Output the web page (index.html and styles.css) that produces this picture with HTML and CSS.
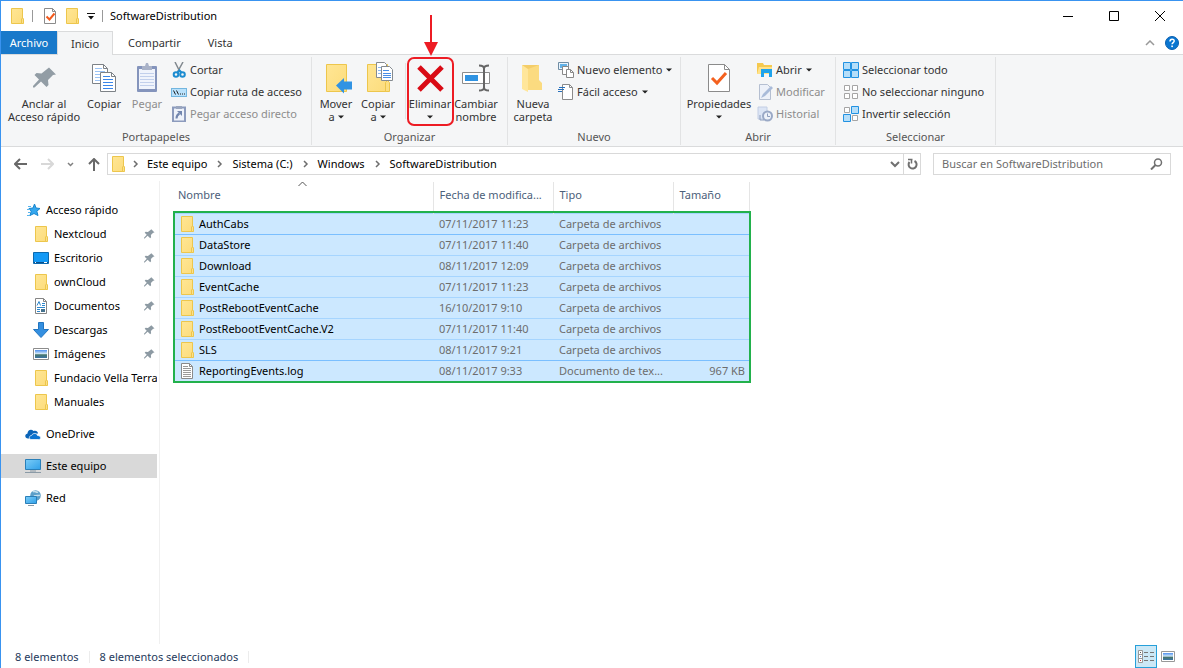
FILE: index.html
```html
<!DOCTYPE html>
<html lang="es">
<head>
<meta charset="utf-8">
<title>SoftwareDistribution</title>
<link rel="stylesheet" href="styles.css">
</head>
<body>
<svg class="sprite" aria-hidden="true">
  <defs>
    <linearGradient id="gold" x1="0" y1="0" x2="1" y2="1"><stop offset="0" stop-color="#ffe694"/><stop offset="1" stop-color="#fcdc7c"/></linearGradient>
    <linearGradient id="screen" x1="0" y1="0" x2="1" y2="1"><stop offset="0" stop-color="#7ccdf8"/><stop offset="1" stop-color="#2f9fe8"/></linearGradient>
    <linearGradient id="sky" x1="0" y1="0" x2="0" y2="1"><stop offset="0" stop-color="#4d8ff0"/><stop offset=".45" stop-color="#cfe6f6"/><stop offset=".6" stop-color="#47766c"/><stop offset="1" stop-color="#3b74a6"/></linearGradient>
  </defs>
  <symbol id="folder" viewBox="0 0 16 16"><path d="M2.500.5h11v10h.5v5h-11.500z" fill="url(#gold)" stroke="#edc64c"/><path d="M12.500 15.500v-4.500l1-1 1 1v4.500z" fill="#fbe08a" stroke="#edc64c"/></symbol>
  <symbol id="pin" viewBox="5 5 24 24"><path d="M21 5.500l7 7-3 .5-5 5 .5 5-2 2-5.500-5.500-6.500 6-1.500 0 0-1.500 6-6.500-4.500-4.500 2-2 5 .5 5-4z" fill="#8d9aa3"/></symbol>
  <symbol id="check-doc" viewBox="0 0 14 17"><path d="M1.500.5h8l3 3v12h-11z" fill="#fff" stroke="#8b8b8b"/><path d="M9.500.5v3h3" fill="none" stroke="#8b8b8b"/><path d="M3.500 8.500l3 3 5-6" fill="none" stroke="#f25a1d" stroke-width="2"/></symbol>
  <symbol id="down" viewBox="0 0 6 4"><path d="M0 .5h6l-3 3z" fill="currentColor"/></symbol>
</svg>

<div class="window">
  <header class="titlebar">
    <svg class="i16"><use href="#folder"/></svg>
    <span class="bar"></span>
    <button class="plain" aria-label="Propiedades"><svg width="14" height="17"><use href="#check-doc"/></svg></button>
    <button class="plain" aria-label="Nueva carpeta"><svg class="i16"><use href="#folder"/></svg></button>
    <button class="plain" aria-label="Personalizar"><svg width="8" height="7" viewBox="0 0 8 7"><path d="M0 .5h8" stroke="#111"/><path d="M1 3h6L4 6.500z" fill="#111"/></svg></button>
    <span class="bar"></span>
    <h1>SoftwareDistribution</h1>
    <div class="winbtns">
      <button class="plain" aria-label="Minimizar"><svg width="10" height="10"><path d="M0 5.500h10" stroke="#000"/></svg></button>
      <button class="plain" aria-label="Maximizar"><svg width="10" height="10"><path d="M.5.5h9v9h-9z" fill="none" stroke="#000"/></svg></button>
      <button class="plain" aria-label="Cerrar"><svg width="10" height="10"><path d="M0 0l10 10M10 0L0 10" stroke="#000"/></svg></button>
    </div>
  </header>

  <nav class="tabs">
    <button class="tab file">Archivo</button>
    <button class="tab active">Inicio</button>
    <button class="tab">Compartir</button>
    <button class="tab">Vista</button>
    <div class="tabs-right">
      <button class="plain" aria-label="Minimizar cinta"><svg width="10" height="6"><path d="M1 5l4-4 4 4" fill="none" stroke="#999" stroke-width="1.500"/></svg></button>
      <button class="plain" aria-label="Ayuda"><svg width="14" height="14"><circle cx="7" cy="7" r="6.500" fill="#0a76d1" stroke="#0b5fae"/><path d="M5 5.500c0-3 4.200-3 4.200-.4 0 1.500-2.100 1.500-2.100 3.200" fill="none" stroke="#fff" stroke-width="1.500"/><rect x="6.300" y="9.500" width="1.600" height="1.600" fill="#fff"/></svg></button>
    </div>
  </nav>

  <section class="ribbon">
    <div class="group g-clip">
      <div class="tools">
        <button class="big w80"><svg width="32" height="32" viewBox="0 0 32 32"><path d="M21 5.500l7 7-3 .5-5 5 .5 5-2 2-5.500-5.500-6.500 6-1.500 0 0-1.500 6-6.500-4.500-4.500 2-2 5 .5 5-4z" fill="#929da5"/></svg><span>Anclar al<br>Acceso rápido</span></button>
        <button class="big w40"><svg width="32" height="32" viewBox="0 0 32 32"><g stroke="#7d8287" fill="#fff"><path d="M4.500 2.500h11l4 4v15h-15z"/><path d="M15.500 2.500v4h4" fill="none"/></g><path d="M7 6.500h7M7 9.500h10M7 12.500h10M7 15.500h10M7 18.500h10" stroke="#9bc3f5"/><g stroke="#7d8287" fill="#fff"><path d="M12.500 10.500h11l4 4v15h-15z"/><path d="M23.500 10.500v4h4" fill="none"/></g><path d="M15 14.500h7M15 17.500h10M15 20.500h10M15 23.500h10M15 26.500h10" stroke="#3a86ea"/></svg><span>Copiar</span></button>
        <button class="big w46" disabled><svg width="32" height="32" viewBox="0 0 32 32"><rect x="6" y="4" width="20" height="26" rx="1" fill="#8494bc"/><path d="M8 7h16v20H8z" fill="#f0f4fc"/><path d="M9 11.500h14M9 14.500h14M9 17.500h14M9 20.500h14M9 23.500h14" stroke="#c2d0ec"/><path d="M11 8V4h3l1-3h2l1 3h3v4z" fill="#a9b2c8"/></svg><span>Pegar</span></button>
        <div class="stack">
          <button class="small"><svg class="i16" viewBox="0 0 16 16"><path d="M4 0l5 10M12 0L6.500 10" stroke="#82898f" stroke-width="1.500"/><g fill="none" stroke="#1d8cd0" stroke-width="2"><circle cx="5" cy="12.500" r="2.300"/><circle cx="11.500" cy="12.500" r="2.300"/><path d="M6.500 10.500l2-2 2 2"/></g></svg>Cortar</button>
          <button class="small"><svg class="i16" viewBox="0 0 16 16"><rect x=".5" y="4.500" width="15" height="8" fill="#b9e1fb" stroke="#73b6df"/><path d="M2.500 6.500l2 4M5.500 6.500l2 4M9 10h1M11 10h1M13 10h1" stroke="#222"/></svg>Copiar ruta de acceso</button>
          <button class="small" disabled><svg class="i16" viewBox="0 0 16 16"><rect x="2" y="1.500" width="12" height="14" fill="#eef2fa" stroke="#8c9bbd" stroke-width="2"/><path d="M5 0h6v3H5z" fill="#9aa6bf"/><path d="M5.500 12.500c0-3 1-4 3-5" fill="none" stroke="#7286ae" stroke-width="2"/><path d="M6 5h5v5z" fill="#7286ae"/></svg>Pegar acceso directo</button>
        </div>
      </div>
      <h2>Portapapeles</h2>
    </div>

    <div class="group g-org">
      <div class="tools">
        <button class="big w42"><svg width="32" height="32" viewBox="0 0 32 32"><path d="M6.500 2.500h20v27h-20z" fill="url(#gold)" stroke="#edc64c"/><path d="M32 19.500v8h-8v4l-8-8 8-7.500v3.500z" fill="#3193e3"/></svg><span>Mover<br>a <svg class="dd"><use href="#down"/></svg></span></button>
        <button class="big w42"><svg width="32" height="32" viewBox="0 0 32 32"><path d="M5.500 2.500h20v27h-20z" fill="url(#gold)" stroke="#edc64c"/><path d="M23.500 29.500v-9l2-2 2 2v9z" fill="#fbdf83" stroke="#edc64c"/><g fill="#fff" stroke="#858b90"><path d="M14.500.5h8l2 2v13h-10z"/><path d="M19.500 4.500h8l3 3v11h-11z"/></g><path d="M16 5.500h3M16 8.500h3M16 11.500h3" stroke="#8bb9ef"/><path d="M21 8.500h6M21 11.500h8M21 13.500h8M21 15.500h8" stroke="#4a8fe6"/></svg><span>Copiar<br>a <svg class="dd"><use href="#down"/></svg></span></button>
        <span class="divider"></span>
        <button class="big w46 target"><svg width="32" height="32" viewBox="0 0 32 32"><path d="M5 5l23 23M28 5L5 28" stroke="#d90b15" stroke-width="5"/></svg><span>Eliminar<br><svg class="dd"><use href="#down"/></svg></span>
          <svg class="arrow" width="14" height="42"><path d="M7 0v30" stroke="#ed1c24" stroke-width="2"/><path d="M0 27h14L7 41z" fill="#ed1c24"/></svg></button>
        <button class="big w46"><svg width="32" height="32" viewBox="0 0 32 32"><path d="M2.500 10.500h27v11h-27z" fill="#fff" stroke="#8c8c8c"/><path d="M5 13h13v6H5z" fill="#2f93e2"/><path d="M19 3.500c3 0 5 1 5 3v19c0 2-2 3-5 3M29 3.500c-3 0-5 1-5 3v19c0 2 2 3 5 3" fill="none" stroke="#666" stroke-width="2"/></svg><span>Cambiar<br>nombre</span></button>
      </div>
      <h2>Organizar</h2>
    </div>

    <div class="group g-new">
      <div class="tools">
        <button class="big w46"><svg width="32" height="32" viewBox="0 0 32 32"><path d="M5 3h17v16l3 3v6H11z" fill="#f4cd69"/><path d="M5 3l6 4v23l-6-3z" fill="#ffe69a"/><path d="M11 7l11-4v15l3 3v7H11z" fill="#fbdb80"/></svg><span>Nueva<br>carpeta</span></button>
        <div class="stack">
          <button class="small"><svg class="i16" viewBox="0 0 16 16"><path d="M.5.5h10v7H.5z" fill="#e8f4fd" stroke="#6f8ca3"/><path d="M2 2h7v4H2z" fill="#62b2e8"/><path d="M4.500 4.500h6v8h-6z" fill="#fff" stroke="#888"/><path d="M8.500 7.500h4l3 3v5h-7z" fill="#fff" stroke="#888"/><path d="M12.500 7.500v3h3" fill="none" stroke="#888"/></svg>Nuevo elemento<svg class="dd"><use href="#down"/></svg></button>
          <button class="small"><svg class="i16" viewBox="0 0 16 16"><path d="M4.500.5h7l3 3v12h-10z" fill="#fff" stroke="#8b8b8b"/><path d="M11.500.5v3h3" fill="none" stroke="#8b8b8b"/><path d="M1 3.500h6M0 5.500h6M0 7.500h4" stroke="#2871bd"/></svg>Fácil acceso<svg class="dd"><use href="#down"/></svg></button>
        </div>
      </div>
      <h2>Nuevo</h2>
    </div>

    <div class="group g-open">
      <div class="tools">
        <button class="big w74"><svg width="32" height="32" viewBox="0 0 32 32"><path d="M5.500 2.500h16l5 5v22h-21z" fill="#fff" stroke="#8b8b8b"/><path d="M21.500 2.500v5h5" fill="none" stroke="#8b8b8b"/><path d="M9 16l5 5 9-10" fill="none" stroke="#f4611f" stroke-width="3"/></svg><span>Propiedades<br><svg class="dd"><use href="#down"/></svg></span></button>
        <div class="stack">
          <button class="small"><svg class="i16" viewBox="0 0 16 16"><path d="M0 1h6l1 2h8v9H0z" fill="#f5c94f"/><path d="M2 5h13v7H0z" fill="#ffe28a"/><path d="M4 15V7h11v8h-3v-4H7v4z" fill="#1fa3ec"/></svg>Abrir<svg class="dd"><use href="#down"/></svg></button>
          <button class="small" disabled><svg class="i16" viewBox="0 0 16 16"><path d="M2.500.5h8l3 3v12h-11z" fill="#edf1f9" stroke="#b5bfd1"/><path d="M4 14l2-4 8-8 2 2-8 8z" fill="#a9bbd9"/></svg>Modificar</button>
          <button class="small" disabled><svg class="i16" viewBox="0 0 16 16"><path d="M1 1h9v12H1z" fill="#dce5f5" stroke="#c2cee4"/><circle cx="10.500" cy="10" r="4.500" fill="#eef2f9" stroke="#9aa9c6" stroke-width="2"/><path d="M10.500 7.500v3h2.500M3 9v5h4" fill="none" stroke="#8d9dbd"/></svg>Historial</button>
        </div>
      </div>
      <h2>Abrir</h2>
    </div>

    <div class="group g-sel">
      <div class="tools">
        <div class="stack">
          <button class="small"><svg class="i16" viewBox="0 0 16 16"><path d="M.5.5h7v7h-7zM8.500.5h7v7h-7zM.5 8.500h7v7h-7zM8.500 8.500h7v7h-7z" fill="#b5def9" stroke="#2292e2"/></svg>Seleccionar todo</button>
          <button class="small"><svg class="i16" viewBox="0 0 16 16"><path d="M1.500 1.500h5v5h-5zM9.500 1.500h5v5h-5zM1.500 9.500h5v5h-5zM9.500 9.500h5v5h-5z" fill="#fff" stroke="#a5a5a5"/></svg>No seleccionar ninguno</button>
          <button class="small"><svg class="i16" viewBox="0 0 16 16"><path d="M1.500 1.500h5v5h-5zM9.500 9.500h5v5h-5z" fill="#fff" stroke="#a5a5a5"/><path d="M8.500.5h7v7h-7zM.5 8.500h7v7h-7z" fill="#b5def9" stroke="#2292e2"/></svg>Invertir selección</button>
        </div>
      </div>
      <h2>Seleccionar</h2>
    </div>
  </section>

  <div class="addressbar">
    <div class="history">
      <button class="plain" aria-label="Atrás"><svg width="13" height="12"><path d="M1 6h12M6 1L1 6l5 5" fill="none" stroke="#686868" stroke-width="2"/></svg></button>
      <button class="plain" aria-label="Adelante"><svg width="13" height="12"><path d="M0 6h12M7 1l5 5-5 5" fill="none" stroke="#d8d8d8" stroke-width="2"/></svg></button>
      <button class="plain" aria-label="Recientes"><svg width="7" height="5"><path d="M1 1l2.500 2.500L6 1" fill="none" stroke="#808080" stroke-width="1.500"/></svg></button>
      <button class="plain" aria-label="Arriba"><svg width="12" height="13"><path d="M6 13V1M1 6l5-5 5 5" fill="none" stroke="#686868" stroke-width="2"/></svg></button>
    </div>
    <div class="path">
      <svg class="i16"><use href="#folder"/></svg>
      <svg class="chev"><path d="M1 1l3 3-3 3" fill="none" stroke="#6e6e6e" stroke-width="1.500"/></svg>
      <a href="#">Este equipo</a>
      <svg class="chev"><path d="M1 1l3 3-3 3" fill="none" stroke="#6e6e6e" stroke-width="1.500"/></svg>
      <a href="#">Sistema (C:)</a>
      <svg class="chev"><path d="M1 1l3 3-3 3" fill="none" stroke="#6e6e6e" stroke-width="1.500"/></svg>
      <a href="#">Windows</a>
      <svg class="chev"><path d="M1 1l3 3-3 3" fill="none" stroke="#6e6e6e" stroke-width="1.500"/></svg>
      <a href="#">SoftwareDistribution</a>
      <button class="plain drop" aria-label="Ubicaciones anteriores"><svg width="10" height="7"><path d="M1 1l4 4 4-4" fill="none" stroke="#707070" stroke-width="2"/></svg></button>
      <button class="plain reload" aria-label="Actualizar"><svg width="11" height="12"><path d="M7.500 3a4 4 0 1 1-5 1" fill="none" stroke="#707070" stroke-width="2"/><path d="M1 1.500h4.500M4.500 1v4.500" fill="none" stroke="#707070" stroke-width="1.500"/></svg></button>
    </div>
    <label class="search">
      <input type="search" placeholder="Buscar en SoftwareDistribution" aria-label="Buscar en SoftwareDistribution">
      <svg width="13" height="12"><circle cx="8" cy="4.500" r="3.500" fill="none" stroke="#707070" stroke-width="1.500"/><path d="M5.500 7L1 11.500" stroke="#707070" stroke-width="2"/></svg>
    </label>
  </div>

  <main class="content">
    <nav class="sidebar">
      <a href="#" class="root quick"><svg class="i16" viewBox="0 0 16 16"><path d="M9.500 2l1.500 4 4 .5-3.200 2.700 1.200 4.300-4-2L5 13.500l1.200-4.300L4 6.500l4-.5z" fill="#35a7ee" stroke="#1685ce"/><path d="M3 4.500h3M2 7.500h3M3 10.500h2M2 13.500h3" stroke="#58b4ec"/></svg>Acceso rápido</a>
      <a href="#"><svg class="i16"><use href="#folder"/></svg>Nextcloud<svg class="pin"><use href="#pin"/></svg></a>
      <a href="#"><svg class="i16" viewBox="0 0 16 16"><path d="M.5 2.500h15v11H.5z" fill="#1499f5" stroke="#0c69ae"/><path d="M1 12.500h14" stroke="#0a4f8b"/><path d="M2 12.500h1M11 12.500h3" stroke="#fff"/></svg>Escritorio<svg class="pin"><use href="#pin"/></svg></a>
      <a href="#"><svg class="i16"><use href="#folder"/></svg>ownCloud<svg class="pin"><use href="#pin"/></svg></a>
      <a href="#"><svg class="i16" viewBox="0 0 16 16"><path d="M2.500.5h8l3 3v12h-11z" fill="#fff" stroke="#858585"/><path d="M10.500.5v3h3" fill="none" stroke="#858585"/><path d="M4 7.500l2-4 1.500 4M4 9.500h8M4 11.500h3M4 13.500h3M9 5.500h3M9 7.500h3" fill="none" stroke="#2d86cb"/><path d="M8 11h4v3H8z" fill="#43718d"/></svg>Documentos<svg class="pin"><use href="#pin"/></svg></a>
      <a href="#"><svg class="i16" viewBox="0 0 16 16"><path d="M5.500.5h5v7h5L8 15.500.5 7.500h5z" fill="#348fe0" stroke="#2275c0"/></svg>Descargas<svg class="pin"><use href="#pin"/></svg></a>
      <a href="#"><svg class="i16" viewBox="0 0 16 16"><path d="M.5 2.500h15v11H.5z" fill="#fff" stroke="#8c8c8c"/><path d="M2 4h12v8H2z" fill="url(#sky)"/></svg>Imágenes<svg class="pin"><use href="#pin"/></svg></a>
      <a href="#"><svg class="i16"><use href="#folder"/></svg>Fundacio Vella Terra</a>
      <a href="#"><svg class="i16"><use href="#folder"/></svg>Manuales</a>
      <a href="#" class="root"><svg class="i16" viewBox="0 0 16 16"><path d="M3 12.500c-3 0-4-4-.5-5 0-3 3.500-5 6-2.500 3-1 4.500 1 4.500 2.500L8 8l-3 4.500z" fill="#0a64b8"/><path d="M6 13.500c-2.500-.5-2-4 .5-4C8 6.500 12 7 12.500 9.500c4 0 4 4 1 4z" fill="#0b73d0" stroke="#fff" stroke-width=".7"/></svg>OneDrive</a>
      <a href="#" class="root current"><svg class="i16" viewBox="0 0 16 16"><path d="M.5 1.500h15v10H.5z" fill="url(#screen)" stroke="#2a7fb8"/><path d="M5 13h6M0 14.500h16" stroke="#8a9aa6"/></svg>Este equipo</a>
      <a href="#" class="root"><svg class="i16" viewBox="0 0 16 16"><circle cx="10.500" cy="5.500" r="5.300" fill="#5c9fc9"/><path d="M8 2c2-2 3 1 5 0M9 6c2-1 5 0 6-1" stroke="#c3dfed" fill="none" stroke-width="1.500"/><path d="M.5 6.500h11v7H.5z" fill="url(#screen)" stroke="#2a7fb8"/><path d="M3 15.500h6" stroke="#8a9aa6"/></svg>Red</a>
    </nav>

    <section class="files">
      <div class="head-mark"><svg width="9" height="6"><path d="M.5 5l4-4 4 4" fill="none" stroke="#555"/></svg></div>
      <table>
        <colgroup><col class="c-name"><col class="c-date"><col class="c-type"><col class="c-size"></colgroup>
        <thead><tr><th>Nombre</th><th>Fecha de modifica...</th><th>Tipo</th><th>Tamaño</th></tr></thead>
        <tbody>
          <tr class="strong"><td><svg class="i16"><use href="#folder"/></svg>AuthCabs</td><td>07/11/2017 11:23</td><td>Carpeta de archivos</td><td></td></tr>
          <tr><td><svg class="i16"><use href="#folder"/></svg>DataStore</td><td>07/11/2017 11:40</td><td>Carpeta de archivos</td><td></td></tr>
          <tr><td><svg class="i16"><use href="#folder"/></svg>Download</td><td>08/11/2017 12:09</td><td>Carpeta de archivos</td><td></td></tr>
          <tr><td><svg class="i16"><use href="#folder"/></svg>EventCache</td><td>07/11/2017 11:23</td><td>Carpeta de archivos</td><td></td></tr>
          <tr><td><svg class="i16"><use href="#folder"/></svg>PostRebootEventCache</td><td>16/10/2017 9:10</td><td>Carpeta de archivos</td><td></td></tr>
          <tr><td><svg class="i16"><use href="#folder"/></svg>PostRebootEventCache.V2</td><td>07/11/2017 11:40</td><td>Carpeta de archivos</td><td></td></tr>
          <tr class="strong"><td><svg class="i16"><use href="#folder"/></svg>SLS</td><td>08/11/2017 9:21</td><td>Carpeta de archivos</td><td></td></tr>
          <tr><td><svg class="i16" viewBox="0 0 16 16"><path d="M2.500.5h8l3 3v12h-11z" fill="#fff" stroke="#8a8a8a"/><path d="M10.500.5v3h3" fill="none" stroke="#8a8a8a"/><path d="M4 3.500h5M4 5.500h8M4 7.500h8M4 9.500h8M4 11.500h8M4 13.500h8" stroke="#9a9a9a"/></svg>ReportingEvents.log</td><td>08/11/2017 9:33</td><td>Documento de tex...</td><td>967 KB</td></tr>
        </tbody>
      </table>
    </section>
  </main>

  <footer class="status">
    <span>8 elementos</span>
    <span>8 elementos seleccionados</span>
    <div class="views">
      <button class="plain on" aria-label="Detalles"><svg width="16" height="14"><path d="M.5.5h4v12h-4zM.5 4.500h4M.5 8.500h4" fill="#fff" stroke="#999"/><path d="M2 2.500h1" stroke="#555"/><path d="M2 6.500h1" stroke="#4a7fd0"/><path d="M2 10.500h1" stroke="#c33"/><path d="M6 2.500h4M12 2.500h4M6 6.500h4M12 6.500h4M6 10.500h4M12 10.500h4" stroke="#777"/></svg></button>
      <button class="plain" aria-label="Iconos grandes"><svg width="14" height="11"><path d="M.5.5h13v10H.5z" fill="#fff" stroke="#999"/><path d="M2 2h10v7H2z" fill="url(#sky)"/></svg></button>
    </div>
  </footer>
</div>
</body>
</html>
```
FILE: styles.css
```css
* { box-sizing: border-box; }

body {
  margin: 0;
  font-family: "Noto Sans", "Open Sans", sans-serif;
  font-size: 11px;
  line-height: 16px;
  color: #000;
  background: #fff;
}

button, input { font: inherit; color: inherit; }
button { border: 0; background: none; padding: 0; margin: 0; white-space: nowrap; }
a { color: inherit; text-decoration: none; }
svg { display: block; flex: none; }
h1, h2 { margin: 0; font-size: 11px; font-weight: 400; }

.sprite { position: absolute; width: 0; height: 0; }
.i16 { width: 16px; height: 16px; }
.plain { display: flex; align-items: center; justify-content: center; }

.window {
  min-height: 100vh;
  display: flex;
  flex-direction: column;
  border-top: 1px solid #3993f0;
  border-left: 1px solid #3993f0;
}

/* Title bar */
.titlebar { display: flex; align-items: center; height: 30px; padding-left: 8px; }
.titlebar .bar { width: 1px; height: 12px; background: #999; margin: 0 10px 0 7px; }
.titlebar .plain { margin-right: 7px; }
.titlebar .plain + .bar { margin: 0 7px 0 0; }
.titlebar .winbtns { display: flex; margin-left: auto; }
.titlebar .winbtns .plain { width: 46px; height: 30px; margin: 0; }

/* Tabs */
.tabs { display: flex; height: 23px; position: relative; }
.tab { height: 23px; padding: 0 15px; color: #333; }
.tab.file { width: 56px; padding: 0; background: #1979ca; color: #fff; }
.tab.active {
  width: 56px;
  padding: 0;
  height: 24px;
  background: #f5f6f7;
  border: 1px solid #dadbdc;
  border-bottom: 0;
  z-index: 1;
}
.tab:nth-child(4) { padding: 0 12px; }
.tabs-right { display: flex; align-items: center; gap: 10px; margin-left: auto; padding-right: 4px; }

/* Ribbon */
.ribbon {
  display: flex;
  background: #f5f6f7;
  border-top: 1px solid #dadbdc;
  border-bottom: 1px solid #dadbdc;
  padding: 2px 0 1px;
  color: #333;
}
.group { border-right: 1px solid #e2e3e4; padding-top: 2px; }
.group h2 { text-align: center; color: #555; line-height: 16px; padding-top: 2px; }
.tools { display: flex; height: 68px; }
.g-clip { width: 311px; }
.g-org { width: 196px; }
.g-new { width: 173px; }
.g-open { width: 155px; }
.g-sel { width: 160px; }
.g-clip .tools, .g-org .tools { padding-left: 3px; }
.g-clip .stack { padding-left: 1px; }
.g-new .tools { padding-left: 2px; }
.g-open .tools { padding-left: 1px; }
.g-open .stack { padding-left: 1px; }
.g-sel .tools { padding-left: 7px; }

.big { display: flex; flex-direction: column; align-items: center; padding-top: 3px; line-height: 13px; position: relative; }
.big > span { display: block; margin-top: 3px; text-align: center; }
.w40 { width: 40px; }
.w42 { width: 42px; }
.w46 { width: 46px; }
.w74 { width: 74px; }
.w80 { width: 80px; }
.dd { display: inline-block; width: 6px; height: 4px; vertical-align: 2px; color: #222; }
.divider { width: 1px; height: 56px; margin: 4px 1px 0 6px; background: #e2e3e4; }

.small { display: flex; align-items: center; height: 22px; gap: 3px; }
.small .dd { margin-left: 1px; }
.g-new .stack { padding-left: 2px; }
button:disabled { color: #8d8d8d; }

.target::after {
  content: "";
  position: absolute;
  inset: -2px -1px 1px 0;
  border: 2px solid #ed1c24;
  border-radius: 7px;
}
.arrow { position: absolute; left: 17px; bottom: 100%; margin-bottom: 2px; }

/* Address bar */
.addressbar { display: flex; align-items: center; padding: 6px 12px 6px 13px; height: 34px; }
.history { display: flex; align-items: center; width: 93px; justify-content: space-between; padding-right: 7px; }
.path { flex: 1; display: flex; align-items: center; height: 22px; border: 1px solid #d9d9d9; padding-left: 2px; }
.chev { width: 6px; height: 8px; margin: 0 9px 0 10px; }
.path .i16 + .chev { margin: 0 8px 0 7px; }
.path .drop { margin-left: auto; width: 16px; height: 20px; }
.path .reload { width: 17px; height: 20px; border-left: 1px solid #d9d9d9; }
.search { display: flex; align-items: center; width: 238px; height: 22px; margin-left: 12px; padding: 0 7px 0 8px; border: 1px solid #d9d9d9; }
.search input { flex: 1; min-width: 0; border: 0; padding: 0; outline: 0; background: none; }
.search input::placeholder { color: #6d6d6d; opacity: 1; }

/* Content */
.content { flex: 1; display: flex; }
.sidebar { width: 159px; border-right: 1px solid #f0f0f0; padding: 17px 2px 0 0; }
.sidebar a { display: flex; align-items: center; height: 24px; padding-left: 32px; gap: 5px; white-space: nowrap; overflow: hidden; }
.sidebar .root { padding-left: 24px; margin-top: 8px; }
.sidebar .quick { margin-top: 0; }
.sidebar .current { background: #d9d9d9; }
.pin { width: 11px; height: 11px; margin: 0 2px 0 auto; }

.files { flex: 1; padding-left: 15px; }
.head-mark { height: 1px; padding-left: 123px; }
table { width: 574px; border-collapse: collapse; table-layout: fixed; }
.c-name { width: 258px; }
.c-date, .c-type { width: 120px; }
.c-size { width: 76px; }
th { height: 31px; padding: 0 0 5px 6px; text-align: left; font-weight: 400; color: #4c607a; white-space: nowrap; border-right: 1px solid #e5e5e5; }
th:first-child { padding-left: 3px; }
tbody { outline: 2px solid #22b14c; }
tbody tr { background: #cce8ff; border-top: 1px solid #a6d5ff; border-bottom: 1px solid #a6d5ff; }
tbody .strong { border-bottom-color: #7abfff; }
td { height: 21px; padding: 0 0 0 6px; color: #6d6d6d; white-space: nowrap; }
td:first-child { padding-left: 4px; color: #000; }
td:first-child svg { display: inline-block; vertical-align: top; margin-right: 4px; }
td:last-child { text-align: right; padding-right: 4px; }

/* Status bar */
.status { display: flex; align-items: center; height: 24px; padding: 1px 0 0 14px; color: #1e395b; }
.status span { padding-right: 10px; margin-right: 10px; border-right: 1px solid #ececec; line-height: 12px; }
.views { display: flex; align-items: center; margin-left: auto; padding-right: 4px; }
.views .plain { width: 22px; height: 23px; }
.views .on { background: #cce8f6; border: 1px solid #26a0da; }
```
